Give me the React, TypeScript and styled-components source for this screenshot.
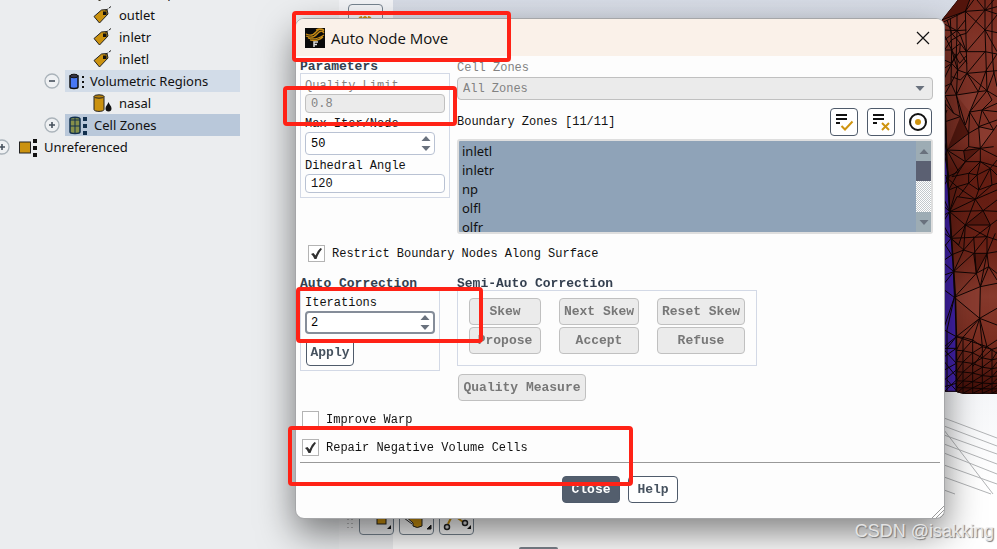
import React, { useState } from "react";
import styled, { createGlobalStyle, css } from "styled-components";

const mono = '"Liberation Mono", monospace';
const sans = '"Noto Sans", "Open Sans", sans-serif';

const GlobalStyle = createGlobalStyle`
  *, *::before, *::after { box-sizing: border-box; }
  body { margin: 0; overflow: hidden; font-family: ${sans}; color: #111; }
  button, input, select { font: inherit; margin: 0; }
  ul { list-style: none; margin: 0; padding: 0; }
`;

const Workspace = styled.div`
  position: relative;
  display: grid;
  grid-template-columns: 339px 54px 1fr;
  height: 100vh;
  overflow: hidden;
`;

/* ---------- Outline tree ---------- */

const Sidebar = styled.nav`
  background: #ebedef;
  overflow: hidden;
`;

const Tree = styled.ul`
  margin-top: -18px;
`;

const TreeRow = styled.li<{ $indent: number }>`
  display: flex;
  align-items: center;
  height: 22px;
  padding-left: ${(p) => p.$indent}px;
`;

const Expander = styled.button`
  display: grid;
  flex: none;
  width: 16px;
  height: 16px;
  padding: 0;
  border: 0;
  background: none;
`;

const TreeLabel = styled.span<{ $tone?: string; $lead: number; $gap: number }>`
  display: flex;
  align-items: center;
  gap: ${(p) => p.$gap}px;
  height: 22px;
  margin-left: ${(p) => p.$lead}px;
  padding-left: 4px;
  width: ${(p) => (p.$tone ? "175px" : "auto")};
  background: ${(p) => p.$tone ?? "transparent"};
  font-size: 13px;
  line-height: 22px;
  white-space: nowrap;
`;

const Icon = styled.svg`
  display: block;
  flex: none;
`;

const TagIcon = () => (
  <Icon width="19" height="18" viewBox="0 0 19 18">
    <path d="M1 10.500 8.500 4 14 3.500 15 8 6.500 17Z" fill="#cb920f" stroke="#222" />
    <rect x="10" y="5.500" width="3.500" height="3.500" fill="#111" />
    <path d="M12.500 5 15 2.500M16 2 18 .5" stroke="#222" fill="none" />
  </Icon>
);

const RegionsIcon = () => (
  <Icon width="15" height="17" viewBox="0 0 15 17">
    <path d="M1 3v11c0 2 8 2 8 0V3z" fill="#4878f5" stroke="#111" strokeWidth="1.500" />
    <ellipse cx="5" cy="3" rx="4" ry="1.800" fill="#334" stroke="#111" />
    <path d="M13 3h2v2h-2zM13 8h2v2h-2zM13 13h2v2h-2z" fill="#111" />
  </Icon>
);

const VolumeIcon = () => (
  <Icon width="19" height="18" viewBox="0 0 19 18">
    <path d="M1 2.500v13c0 2.500 10 2.500 10 0v-13z" fill="#cb920f" stroke="#222" />
    <ellipse cx="6" cy="2.500" rx="5" ry="1.700" fill="#b7820c" stroke="#222" />
    <path d="M15.500 8c1 3 3 4 3 6.500a3 3 0 0 1-6 0c0-2.500 2-3.500 3-6.500z" fill="#111" />
  </Icon>
);

const CellsIcon = () => (
  <Icon width="19" height="19" viewBox="0 0 19 19">
    <path d="M1 3v13c0 2 10 2 10 0V3c0-2.500-10-2.500-10 0z" fill="#85904a" stroke="#12304d" strokeWidth="1.500" />
    <path d="M6 2v15M1 10h10M1 4h10" stroke="#12304d" fill="none" />
    <path d="M14 1h4v4h-4zM14 8h4v4h-4zM14 15h4v4h-4z" fill="#12304d" />
  </Icon>
);

const UnreferencedIcon = () => (
  <Icon width="18" height="19" viewBox="0 0 18 19">
    <rect x=".5" y="4" width="11" height="11" fill="#cb920f" stroke="#222" />
    <path d="M14 1h4v4h-4zM14 8h4v4h-4zM14 15h4v4h-4z" fill="#111" />
  </Icon>
);

const Toggle = ({ open, label }: { open?: boolean; label: string }) => (
  <Expander aria-label={label} aria-expanded={!!open}>
    <Icon width="16" height="16" viewBox="0 0 16 16">
      <circle cx="8" cy="8" r="7" fill="#eff1f3" stroke="#aab3ba" strokeWidth="1.300" />
      <path d={open ? "M5 8h6" : "M5 8h6M8 5v6"} stroke="#46505c" strokeWidth="1.600" />
    </Icon>
  </Expander>
);

/* ---------- Graphics area ---------- */

const ToolColumn = styled.div`
  background: linear-gradient(#f3f4f7, #eff0f2);
`;

const Viewport = styled.main`
  background: linear-gradient(#d7dce6 0, #e3e7ee 40%, #fff 88%);
`;

const Scene = styled.svg`
  position: absolute;
  top: 0;
  right: 0;
`;

const TopTool = styled.button`
  position: absolute;
  left: 348px;
  top: 4px;
  width: 35px;
  height: 35px;
  padding: 4px;
  border: 1px solid #76838f;
  border-radius: 4px;
  background: #f3f4f7;
`;

const BottomTools = styled.div`
  position: absolute;
  left: 346px;
  bottom: 14px;
  display: flex;
  align-items: end;
  gap: 5px;
`;

const ToolButton = styled.button`
  display: grid;
  place-items: end center;
  width: 35px;
  height: 35px;
  padding: 0 0 3px;
  border: 1px solid #76838f;
  border-radius: 4px;
  background: transparent;
`;

const Handle = styled.span`
  position: absolute;
  left: 519px;
  bottom: 0;
  width: 39px;
  height: 2px;
  border-radius: 4px 4px 0 0;
  background: #7b828b;
`;

/* The model is drawn in a 180-unit wide space, three units to a pixel. */
const fineFan = () => {
  const xs = [58, 78, 107, 136, 165, 190];
  const tops = [1010, 1012, 1020, 1040, 1048, 1040];
  const steps = [0, 0.24, 0.44, 0.62, 0.78, 0.9, 1];
  const y = (c: number, k: number) => tops[c] + (1180 - tops[c]) * steps[k];
  let d = "";
  for (let c = 0; c < 5; c++) {
    d += `M${xs[c]} ${y(c, 0)}V1185`;
    for (let k = 0; k < 6; k++) {
      d += `M${xs[c]} ${y(c, k)}L${xs[c + 1]} ${y(c + 1, k)}`;
      d += `M${xs[c]} ${y(c, k + 1)}L${xs[c + 1]} ${y(c + 1, k)}`;
    }
  }
  return d;
};

const upperEdges =
  "M62 0 14 60M98 0 85 34 14 60M110 0 85 34M144 0V90L148 210 150 272M120 0 144 30 180 42M144 30 170 0M85 34 144 30 180 20M85 34 88 155 90 220" +
  "M85 34 144 90 180 45M88 155 144 90 180 98M88 100 144 30M88 155 144 155 180 162M90 220 144 155M90 220 180 212M144 90 180 155M165 0V150L170 215 180 260M148 210 180 162" +
  "M90 220 58 285M90 220 124 275M90 220 150 272M124 275 148 210M150 272 172 215M20 66 85 34M22 72 60 92 85 60M22 90 60 92 70 105 88 155" +
  "M22 120 60 92 88 90M40 56 44 150 42 250M60 45V92L58 160 62 210 58 285M22 150 44 120 70 105 88 100M22 150 44 150 70 130 88 155M22 180 44 190 68 155 88 155M22 205 44 190 62 210 90 220" +
  "M22 235 44 190 58 160M22 260 42 250 62 210M44 230 70 240 90 220M22 285 42 250 58 285M30 60 44 100 70 130 68 155 90 190M22 105 44 150 68 190 90 165M62 210 88 180M44 150 62 210";

const middleEdges =
  "M24 287 58 285 124 275 150 272 180 290M24 287 50 340 70 350 25 365M58 285 70 350M58 285 85 375 98 336 124 275M50 340 24 310M98 336 150 272M98 336 135 330 180 335" +
  "M98 336 125 380 135 330 165 300 150 272M135 330 180 310M125 380 180 360M125 380 170 390 180 375M135 330 170 390M125 380 130 445M70 350 95 400 98 336M95 400 130 380M95 400 95 440" +
  "M25 365 30 450 95 400M30 450 80 452 130 445 180 470M80 452 95 440 130 445 170 390M130 445 170 440M30 450 85 485 130 485 180 500M80 452 85 485M130 445 85 485 45 530M130 445V485L160 505 180 480" +
  "M30 450 65 515 85 485M65 515 28 532 35 570 65 515M45 530 95 520 130 485M95 520 120 525 130 485M120 525 160 505 180 525M95 520V550L120 525 125 570 160 505M95 550 60 560 35 570M95 550 125 570 165 555 160 505M165 555 180 550" +
  "M28 532 60 560 115 598 125 570M60 560 38 635 115 598 165 555M35 570 38 635 60 590 115 598 180 570M115 598 138 632 180 600M38 635 138 632 180 634M65 590 95 550M38 635 85 675 138 632 160 675 180 660" +
  "M115 598 85 675 160 675M38 635 42 715 85 675 80 750M42 715 150 710 180 720M85 675 150 710 160 675M42 715 80 750 115 710 160 675M80 750 110 760 150 710 150 760 180 755M110 760 150 760 175 700M85 675 65 735 42 715" +
  "M80 750 50 815 110 760 118 820 150 760 130 860M50 815 118 820 155 800 180 820M42 765 80 750M118 820 110 710M155 800 150 760M118 820 130 860 155 800M118 820 52 892 130 860 180 850M50 815 52 892 128 955 130 860M155 800 180 840" +
  "M128 955 180 925M128 955 180 975M128 955 58 1010M128 955 78 1012M128 955 107 1020M128 955 150 1040M128 955 136 1040M58 1010 150 1040 180 1020M150 1040 180 1060M150 1040 107 1100";

const stripEdges =
  "M24 345 30 330M24 430 28 452 22 480M24 470 36 532 22 555M22 525 36 532M22 600 38 635 22 620M22 660 38 635 22 645M22 680 42 715 22 740M22 700 42 715M22 730 44 765 22 780M22 825 50 815 22 850M50 815 22 790" +
  "M22 870 52 892 22 980M22 990 58 1010 22 1040M52 892 30 990V1175M30 1045 58 1010M22 1045 58 1045M22 1070 58 1045M22 1050 58 1090M22 1110 58 1090M22 1085 58 1130M22 1140 58 1110M22 1160 58 1150M30 1140 58 1172M22 1175 58 1140";

const Mesh = () => (
  <Scene width="60" height="549" viewBox="0 0 180 1647" aria-hidden="true">
    <defs>
      <linearGradient id="skin" x1="0" y1="0" x2="0" y2="1185" gradientUnits="userSpaceOnUse">
        <stop offset="0" stopColor="#74281c" />
        <stop offset=".1" stopColor="#843529" />
        <stop offset=".36" stopColor="#7d3024" />
        <stop offset=".43" stopColor="#641d12" />
        <stop offset=".62" stopColor="#6a2116" />
        <stop offset=".75" stopColor="#86392c" />
        <stop offset=".86" stopColor="#7c2e21" />
        <stop offset="1" stopColor="#3d0c06" />
      </linearGradient>
      <clipPath id="model">
        <path d="M62 0 14 60V1175H57Q75 1184 110 1182T180 1182V0Z" />
      </clipPath>
    </defs>
    <g clipPath="url(#model)" fill="none">
      <path d="M0 0H180V1200H0Z" fill="url(#skin)" />
      <path d="M62 0H98L85 34 14 60Z" fill="#54150c" />
      <path d="M70 350 95 400 30 450ZM80 452 130 445 85 485ZM138 632 160 675 85 675ZM110 760 150 760 118 820Z" fill="#54180f" />
      <path d="M58 285 124 275 98 336ZM125 380 170 390 130 445ZM52 892 130 860 128 955Z" fill="#8b3c30" />
      <path d="M0 300H24L28 450 38 635 50 815 55 892 58 1010V1190H0Z" fill="#4322ae" />
      <g stroke="#100504" strokeWidth="3">
        <path d={upperEdges} />
        <path d={middleEdges} />
        <path d={stripEdges} />
        <path d={fineFan()} />
        <path d="M24 300 28 450 38 635 50 815 55 892 58 1010V1180M22 1175H57Q75 1184 110 1182T180 1182" strokeWidth="5" />
      </g>
    </g>
    <path
      d="M21 1254 180 1314M21 1278 180 1338M21 1305 180 1362M21 1332 180 1392M21 1359 180 1422M21 1395 180 1452M21 1431 162 1482M21 1470 54 1482M21 1290 168 1482"
      stroke="#b2b4b6"
      strokeWidth="3"
      fill="none"
    />
  </Scene>
);

/* ---------- Dialog ---------- */

const Dialog = styled.section`
  position: absolute;
  top: 18px;
  left: 295px;
  right: 52px;
  border: 1px solid #a5a6a8;
  border-radius: 9px;
  background: #fdfdfd;
  box-shadow: 0 14px 36px rgba(0, 0, 0, 0.5);
  font-family: ${mono};
  font-size: 12px;
  line-height: 16px;
`;

const TitleBar = styled.header`
  display: flex;
  align-items: center;
  gap: 6px;
  height: 37px;
  padding: 0 14px 0 9px;
  border-radius: 8px 8px 0 0;
  background: #faf1e9;
`;

const Title = styled.h1`
  flex: 1;
  margin: 0;
  font-family: "Open Sans", sans-serif;
  font-size: 15px;
  font-weight: 400;
  line-height: 20px;
`;

const BareButton = styled.button`
  display: grid;
  place-items: center;
  padding: 0;
  border: 0;
  background: none;
`;

const Columns = styled.div`
  display: grid;
  grid-template-columns: 150px 1fr;
  column-gap: 7px;
  align-items: start;
  padding: 4px 11px 0 4px;
`;

const GroupTitle = styled.h2`
  height: 13px;
  margin: 0;
  color: #333f4f;
  font-size: 13px;
  font-weight: 700;
  line-height: 14px;
`;

const Group = styled.div<{ $width: number; $height?: number }>`
  width: ${(p) => p.$width}px;
  min-height: ${(p) => p.$height ?? 0}px;
  padding: 4px;
  border: 1px solid #d3d9e6;
`;

const Field = styled.div`
  & + & { margin-top: 3px; }
`;

const FieldLabel = styled.label<{ $muted?: boolean }>`
  display: block;
  height: 16px;
  color: ${(p) => (p.$muted ? "#828282" : "#111")};
`;

const controlFrame = css`
  border: 1px solid #b9c2d3;
  border-radius: 4px;
  background: #fff;
`;

const TextInput = styled.input`
  ${controlFrame}
  display: block;
  width: 100%;
  height: 19px;
  padding: 0 5px;
  color: #111;
  &:disabled { background: #ebebeb; border-color: #c0c0c0; color: #828282; }
`;

const Spin = styled.div<{ $active?: boolean }>`
  ${controlFrame}
  display: flex;
  width: 130px;
  height: 23px;
  ${(p) => p.$active && "border: 2px solid #858d99;"}
`;

const SpinInput = styled.input<{ $active?: boolean }>`
  flex: 1;
  min-width: 0;
  padding: 0 0 0 ${(p) => (p.$active ? 4 : 5)}px;
  border: 0;
  outline: 0;
  background: none;
`;

const Arrows = styled.div`
  display: grid;
  grid-template-rows: 1fr 1fr;
  width: 16px;
`;

const DropDown = styled.div`
  display: grid;
  align-items: center;
  margin-top: 1px;
`;

const Select = styled.select`
  grid-area: 1 / 1;
  width: 100%;
  height: 23px;
  padding: 0 5px;
  border: 1px solid #c0c0c0;
  border-radius: 4px;
  background: #ebebeb;
  color: #828282;
  opacity: 1;
  appearance: none;
`;

const Caret = styled.svg`
  grid-area: 1 / 1;
  justify-self: end;
  margin-right: 8px;
  pointer-events: none;
`;

const ListHeader = styled.div`
  display: flex;
  align-items: center;
  gap: 9px;
  margin-top: 8px;
  padding-right: 1px;
`;

const ListTitle = styled.span`
  flex: 1;
`;

const IconButton = styled.button`
  display: grid;
  place-items: center;
  width: 28px;
  height: 28px;
  padding: 0;
  border: 1px solid #4f5b6b;
  border-radius: 4px;
  background: #fff;
`;

const ListFrame = styled.div`
  display: flex;
  height: 95px;
  margin-top: 3px;
  border: 2px solid #dedede;
  border-radius: 3px;
  background: #8fa3b8;
`;

const List = styled.ul`
  flex: 1;
  overflow: hidden;
  padding: 1px 3px 0;
  font-family: ${sans};
  font-size: 13px;
  line-height: 19px;
`;

const ScrollBar = styled.div`
  display: grid;
  grid-template-rows: 20px 20px 1fr 20px;
  width: 15px;
  background: repeating-conic-gradient(#c3c9cc 0 25%, #fff 0 50%) 0 0 / 2px 2px;
`;

const ScrollStep = styled(BareButton)`
  background: #9dacb4;
`;

const ScrollThumb = styled.span`
  background: #5b6072;
`;

const CheckRow = styled.label<{ $indent: number; $top: number }>`
  display: flex;
  align-items: center;
  gap: 7px;
  width: max-content;
  height: 17px;
  margin: ${(p) => p.$top}px 0 0 ${(p) => p.$indent}px;
`;

const CheckBox = styled.span`
  display: grid;
  width: 17px;
  height: 17px;
`;

const CheckInput = styled.input`
  grid-area: 1 / 1;
  width: 17px;
  height: 17px;
  border: 1px solid #b4b4b4;
  background: #fff;
  appearance: none;
  &:checked + svg { visibility: visible; }
`;

const CheckMark = styled.svg`
  grid-area: 1 / 1;
  visibility: hidden;
  pointer-events: none;
`;

const PushButton = styled.button<{ $primary?: boolean; $width?: number }>`
  width: ${(p) => (p.$width ? `${p.$width}px` : "100%")};
  height: 27px;
  padding: 0;
  border: 1px solid #4f5b6b;
  border-radius: 4px;
  background: ${(p) => (p.$primary ? "#535e6d" : "#fff")};
  color: ${(p) => (p.$primary ? "#fff" : "#46525f")};
  font-size: 13px;
  font-weight: 700;
  white-space: nowrap;
  &:disabled { border-color: #c0c0c0; background: #ebebeb; color: #777; }
`;

const CorrectionColumn = styled.div`
  padding-top: 11px;
`;

const ApplySlot = styled.div`
  margin: 5px 0 0 1px;
`;

const ButtonGrid = styled.div`
  display: grid;
  grid-template-columns: 72px 80px 88px;
  gap: 2px 18px;
  padding: 3px 7px 7px;
`;

const QualitySlot = styled.div`
  margin: 8px 0 0 1px;
`;

const Footer = styled.footer`
  display: flex;
  justify-content: center;
  gap: 8px;
  margin: 6px 4px 0;
  padding: 13px 0 15px;
  border-top: 1px solid #999;
`;

const Grip = styled.svg`
  position: absolute;
  right: 0;
  bottom: 0;
`;

const Callout = styled.div<{ $x: number; $y: number; $w: number; $h: number }>`
  position: absolute;
  left: ${(p) => p.$x}px;
  top: ${(p) => p.$y}px;
  width: ${(p) => p.$w}px;
  height: ${(p) => p.$h}px;
  border: 4px solid #ff2216;
  border-radius: 4px;
  pointer-events: none;
`;

const Watermark = styled.span`
  position: absolute;
  right: 3px;
  bottom: 6px;
  color: rgba(238, 238, 238, 0.9);
  font-family: "Liberation Sans", sans-serif;
  font-size: 18px;
  line-height: 24px;
  text-shadow: 1px 1px 1px #777;
`;

const Arrow = ({ down }: { down?: boolean }) => (
  <Icon width="10" height="5" viewBox="0 0 10 5">
    <path d={down ? "M.5 0h9L5 5z" : "M.5 5h9L5 0z"} fill="#69717d" />
  </Icon>
);

type SpinBoxProps = { id: string; initial: string; active?: boolean };

const SpinBox = ({ id, initial, active }: SpinBoxProps) => {
  const [value, setValue] = useState(initial);
  const step = (by: number) => setValue(String(Number(value) + by));
  return (
    <Spin $active={active}>
      <SpinInput id={id} $active={active} value={value} autoFocus={active} onChange={(e) => setValue(e.target.value)} />
      <Arrows>
        <BareButton aria-label="Increase" onClick={() => step(1)}><Arrow /></BareButton>
        <BareButton aria-label="Decrease" onClick={() => step(-1)}><Arrow down /></BareButton>
      </Arrows>
    </Spin>
  );
};

type CheckProps = { label: string; checked?: boolean; indent: number; top: number };

const Check = ({ label, checked, indent, top }: CheckProps) => (
  <CheckRow $indent={indent} $top={top}>
    <CheckBox>
      <CheckInput type="checkbox" defaultChecked={checked} />
      <CheckMark width="17" height="17" viewBox="0 0 17 17">
        <path d="M3 9 5.500 8 7.500 10.500Q9 6 12.500 3L14 4Q10.500 8 8.500 14H6.500Q5.500 11 3 9Z" fill="#303030" />
      </CheckMark>
    </CheckBox>
    {label}
  </CheckRow>
);

const AutoCorrection = () => (
  <CorrectionColumn>
    <GroupTitle>Auto Correction</GroupTitle>
    <Group $width={140} $height={81}>
      <FieldLabel htmlFor="iterations">Iterations</FieldLabel>
      <SpinBox id="iterations" initial="2" active />
      <ApplySlot><PushButton $width={48}>Apply</PushButton></ApplySlot>
    </Group>
  </CorrectionColumn>
);

const SemiAuto = () => (
  <CorrectionColumn>
    <GroupTitle>Semi-Auto Correction</GroupTitle>
    <Group $width={300} $height={76}>
      <ButtonGrid>
        {["Skew", "Next Skew", "Reset Skew", "Propose", "Accept", "Refuse"].map((t) => (
          <PushButton key={t} disabled>{t}</PushButton>
        ))}
      </ButtonGrid>
    </Group>
    <QualitySlot><PushButton disabled $width={128}>Quality Measure</PushButton></QualitySlot>
  </CorrectionColumn>
);

const zones = ["inletl", "inletr", "np", "olfl", "olfr"];

export default function App() {
  return (
    <>
      <GlobalStyle />
      <Workspace>
        <Sidebar aria-label="Outline">
          <Tree>
            <TreeRow $indent={89}><TreeLabel $lead={0} $gap={7}><TagIcon />outlet-np</TreeLabel></TreeRow>
            {["outlet", "inletr", "inletl"].map((name) => (
              <TreeRow key={name} $indent={89}><TreeLabel $lead={0} $gap={7}><TagIcon />{name}</TreeLabel></TreeRow>
            ))}
            <TreeRow $indent={44}>
              <Toggle open label="Collapse Volumetric Regions" />
              <TreeLabel $lead={5} $gap={6} $tone="#d2dce8"><RegionsIcon />Volumetric Regions</TreeLabel>
            </TreeRow>
            <TreeRow $indent={89}><TreeLabel $lead={0} $gap={7}><VolumeIcon />nasal</TreeLabel></TreeRow>
            <TreeRow $indent={44}>
              <Toggle label="Expand Cell Zones" />
              <TreeLabel $lead={5} $gap={6} $tone="#b9c8da"><CellsIcon />Cell Zones</TreeLabel>
            </TreeRow>
            <TreeRow $indent={0}>
              <Icon width="10" height="16" viewBox="6 0 10 16">
                <circle cx="8" cy="8" r="7" fill="#eff1f3" stroke="#aab3ba" strokeWidth="1.300" />
                <path d="M5 8h6M8 5v6" stroke="#46505c" strokeWidth="1.600" />
              </Icon>
              <TreeLabel $lead={5} $gap={7}><UnreferencedIcon />Unreferenced</TreeLabel>
            </TreeRow>
          </Tree>
        </Sidebar>
        <ToolColumn />
        <Viewport />
        <Mesh />
        <TopTool aria-label="View tool">
          <Icon width="25" height="24" viewBox="0 0 25 24">
            <path d="M5 15Q5 7 9 7M19 15Q19 7 15 7M9 9l3-2 3 2" stroke="#cb920f" strokeWidth="2" fill="none" />
          </Icon>
        </TopTool>
        <BottomTools>
          <Icon width="8" height="30" viewBox="0 0 8 30">
            <path d="M2 2v24M6 2v24" stroke="#888" strokeDasharray="1 3" />
          </Icon>
          <ToolButton aria-label="Box">
            <Icon width="30" height="28" viewBox="0 0 30 28">
              <rect x="15" y="12" width="9" height="9" fill="#cb920f" stroke="#222" />
              <path d="M29 22v4h-4z" fill="#111" />
            </Icon>
          </ToolButton>
          <ToolButton aria-label="Cylinder">
            <Icon width="30" height="28" viewBox="0 0 30 28">
              <path d="M2 12 11 20V23Q15 26 20 23V12H5" fill="#cb920f" stroke="#222" />
              <path d="M2 15 10 21M29 22v4h-4z" fill="#111" stroke="#222" />
            </Icon>
          </ToolButton>
          <ToolButton aria-label="Nodes">
            <Icon width="30" height="28" viewBox="0 0 30 28">
              <path d="M6 21 10 13M13 13 21 19" stroke="#cb920f" strokeWidth="2" fill="none" />
              <circle cx="5" cy="24" r="2.500" fill="#ddd" stroke="#222" strokeWidth="1.500" />
              <circle cx="23" cy="20" r="2.500" fill="#ddd" stroke="#222" strokeWidth="1.500" />
              <path d="M29 22v4h-4z" fill="#111" />
            </Icon>
          </ToolButton>
        </BottomTools>
        <Handle />

        <Dialog role="dialog" aria-labelledby="dialog-title">
          <TitleBar>
            <Icon width="20" height="20" viewBox="0 0 20 20">
              <rect width="20" height="20" fill="#0a0a0a" />
              <path d="M1 6Q7 9 11 4T19 3M1 8Q8 11 12 6T19 5M3 10Q10 13 19 7M5 12Q12 14 18 9M11 2Q15 0 19 2" stroke="#c98d16" strokeWidth="1.300" fill="none" />
              <path d="M9 19v-5h4M9 16.500h3" stroke="#ddd" strokeWidth="1.500" fill="none" />
            </Icon>
            <Title id="dialog-title">Auto Node Move</Title>
            <BareButton aria-label="Close window">
              <Icon width="14" height="14" viewBox="0 0 14 14">
                <path d="M1 1l12 12M13 1 1 13" stroke="#111" strokeWidth="1.200" />
              </Icon>
            </BareButton>
          </TitleBar>

          <Columns>
            <div>
              <GroupTitle>Parameters</GroupTitle>
              <Group $width={150}>
                <Field>
                  <FieldLabel $muted htmlFor="quality">Quality Limit</FieldLabel>
                  <TextInput id="quality" defaultValue="0.8" disabled />
                </Field>
                <Field>
                  <FieldLabel htmlFor="max-iter">Max Iter/Node</FieldLabel>
                  <SpinBox id="max-iter" initial="50" />
                </Field>
                <Field>
                  <FieldLabel htmlFor="angle">Dihedral Angle</FieldLabel>
                  <TextInput id="angle" defaultValue="120" />
                </Field>
              </Group>
            </div>
            <div>
              <FieldLabel $muted htmlFor="cell-zones">Cell Zones</FieldLabel>
              <DropDown>
                <Select id="cell-zones" disabled><option>All Zones</option></Select>
                <Caret width="10" height="5" viewBox="0 0 10 5"><path d="M.5 0h9L5 5z" fill="#69717d" /></Caret>
              </DropDown>
              <ListHeader>
                <ListTitle id="boundary">Boundary Zones [11/11]</ListTitle>
                <IconButton aria-label="Select all">
                  <Icon width="20" height="20" viewBox="0 0 20 20">
                    <path d="M2 3h11M2 7h11M2 11h4" stroke="#111" strokeWidth="2" />
                    <path d="M7.500 14 11 17.500 18.500 9.500" stroke="#cf9410" strokeWidth="2" fill="none" />
                  </Icon>
                </IconButton>
                <IconButton aria-label="Deselect all">
                  <Icon width="20" height="20" viewBox="0 0 20 20">
                    <path d="M2 3h11M2 7h11M2 11h4" stroke="#111" strokeWidth="2" />
                    <path d="M11 11l7 7M18 11l-7 7" stroke="#cf9410" strokeWidth="2" />
                  </Icon>
                </IconButton>
                <IconButton aria-label="Highlight">
                  <Icon width="20" height="20" viewBox="0 0 20 20">
                    <circle cx="10" cy="10" r="8" stroke="#111" strokeWidth="2" fill="none" />
                    <circle cx="10" cy="10" r="3" fill="#cf9410" />
                  </Icon>
                </IconButton>
              </ListHeader>
              <ListFrame>
                <List role="listbox" aria-labelledby="boundary" aria-multiselectable="true">
                  {zones.map((z) => <li key={z} role="option" aria-selected="true">{z}</li>)}
                </List>
                <ScrollBar>
                  <ScrollStep aria-label="Scroll up"><Arrow /></ScrollStep>
                  <ScrollThumb />
                  <span />
                  <ScrollStep aria-label="Scroll down"><Arrow down /></ScrollStep>
                </ScrollBar>
              </ListFrame>
            </div>
          </Columns>

          <Check label="Restrict Boundary Nodes Along Surface" checked indent={12} top={11} />

          <Columns>
            <AutoCorrection />
            <SemiAuto />
          </Columns>

          <Check label="Improve Warp" indent={6} top={10} />
          <Check label="Repair Negative Volume Cells" checked indent={6} top={11} />

          <Footer>
            <PushButton $primary $width={58}>Close</PushButton>
            <PushButton $width={50}>Help</PushButton>
          </Footer>
          <Grip width="13" height="13" viewBox="0 0 13 13">
            <path d="M1 13 13 1M5 13 13 5M9 13 13 9" stroke="#999" fill="none" />
          </Grip>
          <Callout $x={-4} $y={-8} $w={219} $h={51} />
          <Callout $x={-13} $y={67} $w={174} $h={40} />
          <Callout $x={0} $y={268} $w={187} $h={56} />
          <Callout $x={-8} $y={407} $w={345} $h={60} />
        </Dialog>
        <Watermark>CSDN @isakking</Watermark>
      </Workspace>
    </>
  );
}
